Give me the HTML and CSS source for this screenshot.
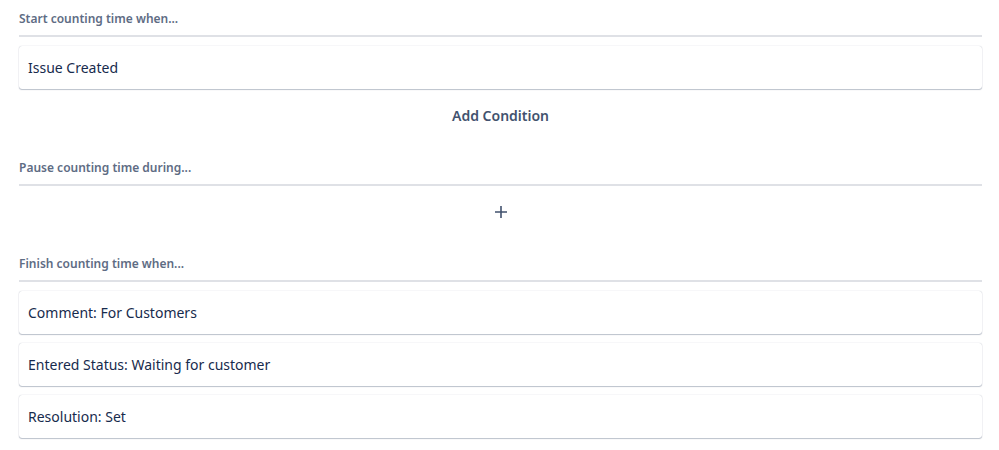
FILE: index.html
```html
<!doctype html>
<html>
<head>
  <title>SLA Conditions</title>
  <meta charset="utf-8">
  <link rel="stylesheet" href="styles.css">
</head>
<body>
  <div class="conditions">
    <div class="section">
      <h2 class="section-title">Start counting time when...</h2>
      <ul class="cond-list">
        <li class="cond-item">Issue Created</li>
      </ul>
      <button class="add-btn">Add Condition</button>
    </div>
    <div class="section">
      <h2 class="section-title">Pause counting time during...</h2>
      <ul class="cond-list"></ul>
      <button class="add-btn add-icon" aria-label="Add">
        <svg width="14" height="14" viewBox="0 0 14 14"><path d="M7 1v12M1 7h12" stroke="#42526e" stroke-width="1.6" fill="none"/></svg>
      </button>
    </div>
    <div class="section">
      <h2 class="section-title">Finish counting time when...</h2>
      <ul class="cond-list">
        <li class="cond-item">Comment: For Customers</li>
        <li class="cond-item">Entered Status: Waiting for customer</li>
        <li class="cond-item">Resolution: Set</li>
      </ul>
    </div>
  </div>
</body>
</html>
```

FILE: styles.css
```css
body{
  margin:0;
  background:#fff;
  font-family:"Noto Sans", "Liberation Sans", sans-serif;
  color:#172b4d;
}
.conditions{
  padding:11px 17px 0 19px;
}
.section{
  margin-bottom:29px;
}
.section-title{
  margin:0;
  font-size:12px;
  line-height:16px;
  font-weight:600;
  color:#5e6c84;
  padding-bottom:8px;
  border-bottom:2px solid #dfe1e6;
}
.cond-list{
  list-style:none;
  margin:0;
  padding:9px 0 0 0;
  display:flex;
  flex-direction:column;
  gap:9px;
}
.cond-list:empty{
  padding-top:0;
}
.cond-item{
  height:43px;
  display:flex;
  align-items:center;
  padding:0 9px;
  font-size:14px;
  background:#fff;
  border-radius:3px;
  box-shadow:0 1px 1px rgba(9,30,66,.25), 0 0 1px rgba(9,30,66,.31);
}
.add-btn{
  display:flex;
  align-items:center;
  justify-content:center;
  width:100%;
  height:32px;
  margin-top:10px;
  border:none;
  background:none;
  font-family:inherit;
  font-size:14px;
  font-weight:600;
  color:#42526e;
}
.add-icon{
  height:31px;
}
```
